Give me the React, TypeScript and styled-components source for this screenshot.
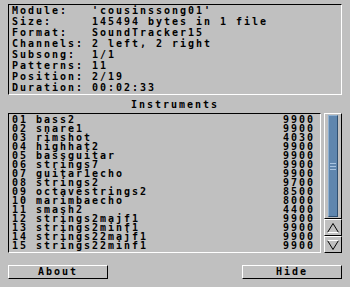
import React from 'react'
import styled, { createGlobalStyle } from 'styled-components'

const GlobalStyle = createGlobalStyle`
  html, body {
    margin: 0;
    padding: 0;
    background: #c0c0c0;
  }
`

const info: [string, string][] = [
  ['Module:', "'cousinssong01'"],
  ['Size:', '145494 bytes in 1 file'],
  ['Format:', 'SoundTracker15'],
  ['Channels:', '2 left, 2 right'],
  ['Subsong:', '1/1'],
  ['Patterns:', '11'],
  ['Position:', '2/19'],
  ['Duration:', '00:02:33'],
]

const instruments: [string, string][] = [
  ['bass2', '9900'],
  ['snare1', '9900'],
  ['rimshot', '4030'],
  ['highhat2', '9900'],
  ['bassguitar', '9900'],
  ['strings7', '9900'],
  ['guitar1echo', '9900'],
  ['strings2', '9700'],
  ['octavestrings2', '8500'],
  ['marimbaecho', '8000'],
  ['smash2', '4400'],
  ['strings2majf1', '9900'],
  ['strings2minf1', '9900'],
  ['strings22majf1', '9900'],
  ['strings22minf1', '9900'],
]

const Window = styled.div`
  width: 350px;
  height: 287px;
  box-sizing: border-box;
  padding: 4px 8px 0;
  background: #c0c0c0;
  color: #000;
  font-family: 'DejaVu Sans Mono', 'Liberation Mono', monospace;
  font-weight: bold;
  font-size: 10px;
  letter-spacing: 1.98px;
  display: flex;
  flex-direction: column;
`

const InfoBox = styled.div`
  border-style: solid;
  border-width: 1px;
  border-color: #000 #fff #fff #000;
  padding: 0 3px 1px;
  display: grid;
  grid-template-columns: 80px 1fr;
  grid-auto-rows: 11px;
  line-height: 11px;
  white-space: pre;
`

const Heading = styled.div`
  margin-top: 4px;
  line-height: 11px;
  text-align: center;
`

const ListRow = styled.div`
  margin-top: 3px;
  display: flex;
  gap: 3px;
  height: 140px;
`

const List = styled.div`
  flex: 1;
  border-style: solid;
  border-width: 1px;
  border-color: #000 #fff #fff #000;
  padding: 1px 5px 2px 3px;
`

const Item = styled.div`
  display: flex;
  height: 9px;
  line-height: 9px;
  white-space: pre;
`

const Num = styled.span`
  width: 24px;
`

const Name = styled.span`
  flex: 1;
`

const Scroller = styled.div`
  width: 18px;
  display: flex;
  flex-direction: column;
`

const Track = styled.div`
  flex: 1;
  border-style: solid;
  border-width: 1px;
  border-color: #fff #000 #000 #fff;
  padding: 1px 3px;
  display: flex;
`

const Knob = styled.div`
  flex: 1;
  background: #5f86ae;
  border-style: solid;
  border-width: 1px;
  border-color: #8fb0d0 #2f4f70 #2f4f70 #8fb0d0;
  display: flex;
  align-items: center;
  justify-content: center;
`

const ArrowButton = styled.div<{ $top?: boolean }>`
  height: ${p => (p.$top ? 15 : 15)}px;
  border-style: solid;
  border-width: 1px;
  border-color: #fff #000 #000 #fff;
  display: flex;
  align-items: center;
  justify-content: center;
`

const Buttons = styled.div`
  margin-top: 12px;
  display: flex;
  justify-content: space-between;
`

const Button = styled.div`
  width: 100px;
  height: 14px;
  box-sizing: border-box;
  border-style: solid;
  border-width: 1px;
  border-color: #fff #000 #000 #fff;
  line-height: 12px;
  text-align: center;
`

const Grip = () => (
  <svg width="6" height="7" viewBox="0 0 6 7">
    <rect x="0" y="0" width="6" height="1" fill="#a9c4e0" />
    <rect x="0" y="3" width="6" height="1" fill="#a9c4e0" />
    <rect x="0" y="6" width="6" height="1" fill="#a9c4e0" />
  </svg>
)

const Arrow = ({ up }: { up?: boolean }) => (
  <svg width="12" height="10" viewBox="0 0 12 10">
    {up ? (
      <>
        <polyline points="0.5,9.5 6,0.5 11.5,9.5" fill="none" stroke="#000" strokeWidth="1" />
        <line x1="0.5" y1="9.5" x2="11.5" y2="9.5" stroke="#fff" strokeWidth="1" />
      </>
    ) : (
      <>
        <polyline points="0.5,0.5 6,9.5 11.5,0.5" fill="none" stroke="#000" strokeWidth="1" />
        <line x1="0.5" y1="0.5" x2="11.5" y2="0.5" stroke="#fff" strokeWidth="1" />
      </>
    )}
  </svg>
)

const App: React.FC = () => {
  return (
    <Window>
      <GlobalStyle />
      <InfoBox>
        {info.map(([label, value]) => (
          <React.Fragment key={label}>
            <span>{label}</span>
            <span>{value}</span>
          </React.Fragment>
        ))}
      </InfoBox>

      <Heading>Instruments</Heading>

      <ListRow>
        <List>
          {instruments.map(([name, len], i) => (
            <Item key={name}>
              <Num>{String(i + 1).padStart(2, '0')}</Num>
              <Name>{name}</Name>
              <span>{len}</span>
            </Item>
          ))}
        </List>
        <Scroller>
          <Track>
            <Knob>
              <Grip />
            </Knob>
          </Track>
          <ArrowButton $top>
            <Arrow up />
          </ArrowButton>
          <ArrowButton>
            <Arrow />
          </ArrowButton>
        </Scroller>
      </ListRow>

      <Buttons>
        <Button>About</Button>
        <Button>Hide</Button>
      </Buttons>
    </Window>
  )
}

export default App
